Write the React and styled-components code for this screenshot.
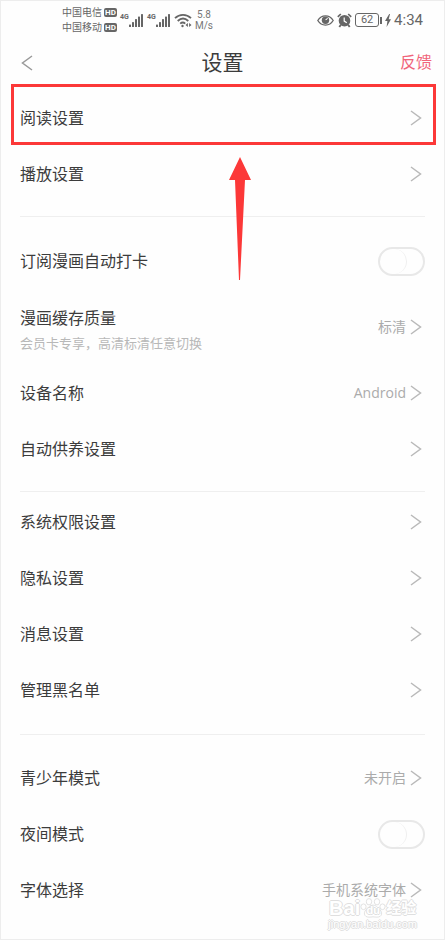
import React from "react";
import styled, { createGlobalStyle } from "styled-components";

const GlobalStyle = createGlobalStyle`
  *, *::before, *::after { box-sizing: border-box; }
  body {
    margin: 0;
    background: #fefefe;
    color: #3c3c3c;
    font-family: Roboto, "Noto Sans CJK SC", sans-serif;
  }
  button, input { font: inherit; color: inherit; }
`;

const Screen = styled.main`
  position: relative;
  min-height: 100vh;
  border: 1px solid #ededed;
  background: #fefefe;
`;

const StatusBar = styled.div`
  display: flex;
  align-items: center;
  justify-content: space-between;
  height: 38px;
  padding: 0 21px 0 61px;
  color: #666;
`;

const StatusGroup = styled.div`
  display: flex;
  align-items: center;
  gap: 3px;
`;

const Carriers = styled.div`
  display: grid;
  gap: 1px;
  font-size: 10px;
  line-height: 14px;
`;

const Carrier = styled.div`
  display: flex;
  align-items: center;
  gap: 2px;
`;

const HdBadge = styled.span`
  display: flex;
  align-items: center;
  justify-content: center;
  width: 13px;
  height: 9px;
  border-radius: 2px;
  background: #666;
  color: #fff;
  font-size: 8px;
  font-weight: 700;
  line-height: 9px;
`;

const Signal = styled.div`
  display: flex;
  align-items: flex-start;
`;

const Network = styled.span`
  width: 9px;
  font-size: 7px;
  font-weight: 700;
  line-height: 8px;
`;

const Speed = styled.div`
  font-size: 10px;
  line-height: 11px;
  text-align: center;
  color: #777;
`;

const Battery = styled.div`
  display: flex;
  align-items: center;
  gap: 1px;

  &::after {
    content: "";
    width: 2px;
    height: 7px;
    background: #666;
  }
`;

const BatteryLevel = styled.span`
  width: 24px;
  height: 14px;
  border: 1px solid #666;
  border-radius: 3px;
  font-size: 11px;
  line-height: 12px;
  text-align: center;
`;

const Clock = styled.time`
  font-size: 15px;
  line-height: 18px;
`;

const Header = styled.header`
  display: grid;
  grid-template-columns: 1fr auto 1fr;
  align-items: center;
  height: 51px;
  padding: 0 12px 4px;
`;

const BackButton = styled.button`
  display: flex;
  justify-self: start;
  padding: 0 8px;
  border: 0;
  background: none;
`;

const Title = styled.h1`
  margin: 0;
  font-size: 21px;
  font-weight: 400;
  line-height: 28px;
`;

const Feedback = styled.a`
  justify-self: end;
  font-size: 16px;
  line-height: 24px;
  color: #f0647a;
  text-decoration: none;
`;

const Settings = styled.div`
  position: relative;
  padding: 0 19px;
`;

const rowLayout = `
  display: flex;
  align-items: center;
  justify-content: space-between;
  width: 100%;
  padding: 0;
  border: 0;
  background: none;
  text-align: left;
`;

const RowButton = styled.button`
  ${rowLayout}
  height: ${(p) => (p.$tall ? 76 : 56)}px;
`;

const RowLabel = styled.label`
  ${rowLayout}
  height: 56px;
`;

const Texts = styled.span`
  display: grid;
  gap: 3px;
  padding-top: ${(p) => (p.$tall ? 6 : 2)}px;
`;

const Name = styled.span`
  font-size: 16px;
  line-height: 24px;
`;

const Note = styled.span`
  font-size: 13px;
  line-height: 20px;
  color: #b8b8b8;
`;

const Trailing = styled.span`
  display: flex;
  align-items: center;
  gap: 4px;
  padding-right: 3px;
`;

const Value = styled.span`
  font-family: "Open Sans", "Noto Sans CJK SC", sans-serif;
  font-size: 14px;
  line-height: 16px;
  color: #ababab;
`;

const Switch = styled.input`
  appearance: none;
  width: 47px;
  height: 29px;
  margin: 0;
  border: 2px solid #e8e8e8;
  border-radius: 15px;
  background: #fefefe;

  &::before {
    content: "";
    display: block;
    width: 27px;
    height: 25px;
    border-right: 1px solid #efefef;
    border-radius: 13px;
  }

  &:checked {
    background: #f0647a;
  }

  &:checked::before {
    margin-left: 16px;
    background: #fff;
  }
`;

const Divider = styled.hr`
  height: 1px;
  margin: ${(p) => p.$before}px 0 ${(p) => p.$after}px;
  border: 0;
  background: #efefef;
`;

const Highlight = styled.div`
  position: absolute;
  top: -6px;
  left: 10px;
  right: 8px;
  height: 61px;
  border: 3px solid #fc3838;
  pointer-events: none;
`;

const Pointer = styled.svg`
  position: absolute;
  top: 67px;
  left: 228px;
  pointer-events: none;
`;

const Watermark = styled.div`
  position: absolute;
  right: 27px;
  bottom: 8px;
  display: grid;
  justify-items: center;
  color: #fff;
  text-shadow: 1px 0 #dfdfdf, -1px 0 #dfdfdf, 0 1px #dfdfdf, 0 -1px #dfdfdf;
  pointer-events: none;
`;

const Brand = styled.div`
  display: flex;
  align-items: center;
  font-family: "Liberation Sans", "Noto Sans CJK SC", sans-serif;
  font-size: 20px;
  font-weight: 700;
  line-height: 18px;
`;

const BrandChinese = styled.span`
  font-size: 15px;
`;

const Paw = styled.span`
  display: grid;
  place-items: center;

  > * { grid-area: 1 / 1; }
`;

const PawText = styled.span`
  padding-top: 4px;
  font-size: 11px;
  line-height: 12px;
`;

const Site = styled.div`
  font-family: "Liberation Sans", sans-serif;
  font-size: 11px;
  line-height: 13px;
`;

function Chevron({ back }) {
  return (
    <svg width="12" height="16" viewBox="0 0 12 16" fill="none" stroke={back ? "#999" : "#b9b9b9"} strokeWidth="1.5" aria-hidden="true">
      <path d={back ? "M11 1 1.5 8 11 15" : "M1 1l9.5 7L1 15"} />
    </svg>
  );
}

function SignalBars() {
  return (
    <svg width="15" height="15" viewBox="0 0 15 15" fill="#666" aria-hidden="true">
      <rect x="0" y="11.5" width="2" height="2.5" rx=".6" />
      <rect x="3" y="9" width="2" height="5" rx=".6" />
      <rect x="6" y="6" width="2" height="8" rx=".6" />
      <rect x="9" y="3.5" width="2" height="10.5" rx=".6" />
      <rect x="12" y="1" width="2" height="13" rx=".6" />
    </svg>
  );
}

function WifiIcon() {
  return (
    <svg width="18" height="15" viewBox="0 0 18 15" fill="none" stroke="#666" strokeWidth="1.8" aria-hidden="true">
      <path d="M1 5.2C5.5.7 12.5.7 17 5.2M3.7 8C7 4.8 11 4.8 14.3 8M6.2 10.6c1.6-1.4 3.6-1.4 5 0" />
      <circle cx="8.5" cy="13" r="1.2" fill="#666" stroke="none" />
      <path d="m11.5 12 2.4-2v4zM17.5 12l-2.4-2v4z" fill="#666" stroke="none" />
    </svg>
  );
}

function EyeIcon() {
  return (
    <svg width="17" height="13" viewBox="0 0 17 13" fill="none" stroke="#666" strokeWidth="1.3" aria-hidden="true">
      <path d="M.8 6.5C4.5.4 12.5.4 16.2 6.5 12.5 12.6 4.5 12.6.8 6.5z" />
      <circle cx="8.5" cy="6.3" r="3.7" fill="#666" stroke="none" />
      <path d="M8.5 5.600a1.700 1.700 0 0 0 1.900-1.700" stroke="#fff" strokeWidth="1" />
    </svg>
  );
}

function AlarmIcon() {
  return (
    <svg width="15" height="15" viewBox="0 0 15 15" fill="none" stroke="#666" aria-hidden="true">
      <circle cx="7.5" cy="7.7" r="5.8" fill="#666" stroke="none" />
      <path d="M.8 3.8 3.8 1M14.2 3.8l-3-2.8" strokeWidth="1.7" />
      <path d="M3.9 11.8 2.3 14M11.1 11.8l1.6 2.2" strokeWidth="1.9" />
      <path d="M7.2 4.5v3.6l2.6 1.7" stroke="#fff" strokeWidth="1.2" />
    </svg>
  );
}

function BoltIcon() {
  return (
    <svg width="6" height="13" viewBox="0 0 6 13" fill="#666" aria-hidden="true">
      <path d="M4.2 0 0 7h2.4L1.6 13 6 5.3H3.7L5 0z" />
    </svg>
  );
}

function PawIcon() {
  return (
    <svg width="26" height="20" viewBox="0 0 26 24" preserveAspectRatio="none" fill="#fff" stroke="#dfdfdf" aria-hidden="true">
      <path d="M13 8.5c3 0 4 2.5 6 4.5 4 3.5 3.5 10-2 10-1.6 0-2.8-.4-4-.4s-2.4.4-4 .4c-5.5 0-6-6.5-2-10 2-2 3-4.5 6-4.5z" />
      <ellipse cx="3.5" cy="10.5" rx="2.6" ry="3.4" />
      <ellipse cx="9" cy="4.5" rx="2.7" ry="3.8" />
      <ellipse cx="17" cy="4.5" rx="2.7" ry="3.8" />
      <ellipse cx="22.5" cy="10.5" rx="2.6" ry="3.4" />
    </svg>
  );
}

function LinkRow({ name, note, value }) {
  const tall = Boolean(note);
  return (
    <RowButton type="button" $tall={tall}>
      <Texts $tall={tall}>
        <Name>{name}</Name>
        {note && <Note>{note}</Note>}
      </Texts>
      <Trailing>
        {value && <Value>{value}</Value>}
        <Chevron />
      </Trailing>
    </RowButton>
  );
}

function SwitchRow({ name }) {
  return (
    <RowLabel>
      <Texts>
        <Name>{name}</Name>
      </Texts>
      <Switch type="checkbox" role="switch" />
    </RowLabel>
  );
}

export default function App() {
  return (
    <>
      <GlobalStyle />
      <Screen>
        <StatusBar>
          <StatusGroup>
            <Carriers>
              <Carrier>中国电信<HdBadge>HD</HdBadge></Carrier>
              <Carrier>中国移动<HdBadge>HD</HdBadge></Carrier>
            </Carriers>
            <Signal><Network>4G</Network><SignalBars /></Signal>
            <Signal><Network>4G</Network><SignalBars /></Signal>
            <WifiIcon />
            <Speed>5.8<br />M/s</Speed>
          </StatusGroup>
          <StatusGroup>
            <EyeIcon />
            <AlarmIcon />
            <Battery><BatteryLevel>62</BatteryLevel></Battery>
            <BoltIcon />
            <Clock>4:34</Clock>
          </StatusGroup>
        </StatusBar>

        <Header>
          <BackButton type="button" aria-label="返回"><Chevron back /></BackButton>
          <Title>设置</Title>
          <Feedback href="#feedback">反馈</Feedback>
        </Header>

        <Settings>
          <LinkRow name="阅读设置" />
          <LinkRow name="播放设置" />
          <Divider $before={14} $after={16} />
          <SwitchRow name="订阅漫画自动打卡" />
          <LinkRow name="漫画缓存质量" note="会员卡专享，高清标清任意切换" value="标清" />
          <LinkRow name="设备名称" value="Android" />
          <LinkRow name="自动供养设置" />
          <Divider $before={14} $after={2} />
          <LinkRow name="系统权限设置" />
          <LinkRow name="隐私设置" />
          <LinkRow name="消息设置" />
          <LinkRow name="管理黑名单" />
          <Divider $before={16} $after={15} />
          <LinkRow name="青少年模式" value="未开启" />
          <SwitchRow name="夜间模式" />
          <LinkRow name="字体选择" value="手机系统字体" />
          <Highlight />
          <Pointer width="22" height="123" viewBox="0 0 22 123" fill="#fc3838" aria-hidden="true">
            <path d="M11 0 22 23h-6l-5 100h-1L6 23H0z" />
          </Pointer>
        </Settings>

        <Watermark>
          <Brand>
            Bai
            <Paw><PawIcon /><PawText>du</PawText></Paw>
            <BrandChinese>经验</BrandChinese>
          </Brand>
          <Site>jingyan.baidu.com</Site>
        </Watermark>
      </Screen>
    </>
  );
}
